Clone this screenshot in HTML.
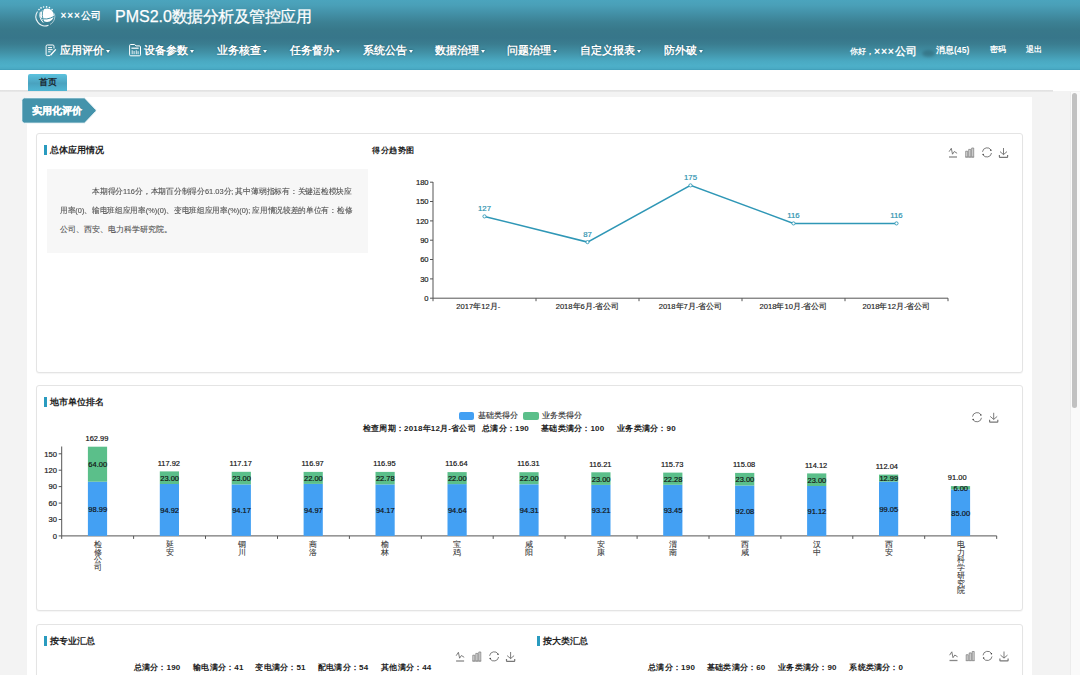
<!DOCTYPE html>
<html><head><meta charset="utf-8">
<style>
*{box-sizing:border-box}
html,body{margin:0;padding:0}
body{width:1080px;height:675px;overflow:hidden;position:relative;background:#f3f3f3;font-family:"Liberation Sans",sans-serif;color:#333}
.abs{position:absolute;white-space:nowrap}
#hdr{position:absolute;left:0;top:0;width:1080px;height:70px;background:linear-gradient(to bottom,#4ba4bd 0px,#4aa0b8 5px,#4493aa 12px,#3c8194 22px,#38788a 30px,#37768a 38px,#3a7d90 44px,#4190a5 52px,#4aa9c2 61px,#4db0c9 66px,#4aaac4 68.5px,#3f9db8 70px)}
#band{position:absolute;left:0;top:70px;width:1080px;height:21px;background:#fff}
#gline{position:absolute;left:0;top:90px;width:1053px;height:2px;background:linear-gradient(#e0e0e0,#e9e9e9)}
#panel{position:absolute;left:27px;top:97px;width:1005px;height:578px;background:#fff}
#sbtrack{position:absolute;left:1069.5px;top:92px;width:10.5px;height:583px;background:#fafafa;border-left:1px solid #ececec}
#sbthumb{position:absolute;left:1071.5px;top:93px;width:5.5px;height:315px;background:#c1c1c1;border-radius:3px}
.nav{position:absolute;top:44px;font-size:11px;font-weight:bold;color:#fff;line-height:13px;text-shadow:0 0 1.5px rgba(20,60,75,0.6)}
.caret{display:inline-block;width:0;height:0;border-left:2.5px solid transparent;border-right:2.5px solid transparent;border-top:3px solid #fff;vertical-align:middle;margin-left:2px;filter:drop-shadow(0 0 1px rgba(20,60,75,0.7))}
.card{position:absolute;left:36px;width:987px;border:1px solid #e4e4e4;border-radius:3px;background:#fff;box-shadow:0 1px 1px rgba(0,0,0,0.04)}
.ttl{position:absolute;font-size:9px;font-weight:bold;color:#222;line-height:10px}
.bar{position:absolute;width:3px;height:10px;background:#2a9bbf}
</style></head>
<body>
<div id="hdr"></div>
<div id="band"></div>
<div id="gline"></div>
<div id="panel"></div>
<div id="sbtrack"></div>
<div id="sbthumb"></div>

<!-- header content -->
<div class="abs" style="left:60.5px;top:10px;font-size:10px;font-weight:bold;color:#fff;line-height:12px"><span style="letter-spacing:0.9px">×××</span>公司</div>
<div class="abs" style="left:115px;top:6.5px;font-size:16px;color:#fff;line-height:19px;-webkit-text-stroke:0.25px #fff">PMS2.0<span style="letter-spacing:-0.5px">数据分析及管控应用</span></div>

<div class="nav" style="left:60px">应用评价<span class="caret"></span></div>
<div class="nav" style="left:144px">设备参数<span class="caret"></span></div>
<div class="nav" style="left:217px">业务核查<span class="caret"></span></div>
<div class="nav" style="left:290px">任务督办<span class="caret"></span></div>
<div class="nav" style="left:363px">系统公告<span class="caret"></span></div>
<div class="nav" style="left:435px">数据治理<span class="caret"></span></div>
<div class="nav" style="left:507px">问题治理<span class="caret"></span></div>
<div class="nav" style="left:579.5px">自定义报表<span class="caret"></span></div>
<div class="nav" style="left:664px">防外破<span class="caret"></span></div>

<div class="abs" style="left:850px;top:45px;font-size:8px;font-weight:bold;color:#fff;line-height:10px">你好，<span style="font-size:10.5px;font-weight:bold;position:relative;top:0.5px"><span style="letter-spacing:0.8px">×××</span>公司</span></div>
<div class="abs" style="left:936px;top:45px;font-size:8.6px;font-weight:bold;color:#fff;line-height:10px">消息(45)</div>
<div class="abs" style="left:990px;top:45px;font-size:8px;font-weight:bold;color:#fff;line-height:10px">密码</div>
<div class="abs" style="left:1026px;top:45px;font-size:8px;font-weight:bold;color:#fff;line-height:10px">退出</div>

<!-- tab -->
<div class="abs" style="left:28px;top:74px;width:39px;height:17px;border-radius:2px 2px 0 0;background:linear-gradient(to bottom,#5cc2de,#4aa2bf 55%,#4fb6d3);font-size:9px;font-weight:bold;color:#1a2a33;text-align:center;line-height:17px">首页</div>

<!-- badge -->
<svg class="abs" style="left:21px;top:97px;overflow:visible" width="77" height="27" viewBox="0 0 77 27"><path d="M3.5 0.8 H63.5 L74.8 12.6 Q75.6 13.5 74.8 14.4 L63.5 26.2 H3.5 Q0.8 26.2 0.8 23.5 V3.5 Q0.8 0.8 3.5 0.8Z" fill="#4493ab" stroke="#fff" stroke-width="1"/></svg>
<div class="abs" style="left:32px;top:104px;font-size:10px;font-weight:bold;color:#fff;line-height:13px;-webkit-text-stroke:0.2px #fff">实用化评价</div>

<!-- cards -->
<div class="card" style="top:133px;height:240px"></div>
<div class="card" style="top:385px;height:226px"></div>
<div class="card" style="top:624px;height:80px"></div>

<div class="bar" style="left:44.3px;top:144.5px"></div>
<div class="ttl" style="left:50px;top:144.5px">总体应用情况</div>
<div class="ttl" style="left:372px;top:146px;font-size:8px;letter-spacing:0.5px">得分趋势图</div>

<div class="bar" style="left:44.3px;top:397px"></div>
<div class="ttl" style="left:50px;top:397px">地市单位排名</div>

<div class="bar" style="left:44.3px;top:636px"></div>
<div class="ttl" style="left:50px;top:636px">按专业汇总</div>
<div class="bar" style="left:537px;top:636px"></div>
<div class="ttl" style="left:542.5px;top:636px">按大类汇总</div>


<!-- info box -->
<div class="abs" style="left:47px;top:169px;width:321px;height:83.5px;background:#f7f7f7"></div>
<div class="abs" style="left:92px;top:181.5px;font-size:7.7px;color:#555;line-height:19.3px;-webkit-text-stroke:0.12px #555;transform:scaleX(0.971);transform-origin:0 0">本期得分116分，本期百分制得分61.03分; 其中薄弱指标有：关键运检模块应</div>
<div class="abs" style="left:60px;top:200.8px;font-size:7.7px;color:#555;line-height:19.3px;-webkit-text-stroke:0.12px #555;transform:scaleX(0.96);transform-origin:0 0">用率(0)、输电班组应用率(%)(0)、变电班组应用率(%)(0); 应用情况较差的单位有：检修</div>
<div class="abs" style="left:60px;top:220.1px;font-size:7.7px;color:#555;line-height:19.3px;-webkit-text-stroke:0.12px #555">公司、西安、电力科学研究院。</div>

<!-- legend + subtitle -->
<div class="abs" style="left:458.6px;top:412px;width:15.5px;height:7.5px;border-radius:2px;background:#43a0f3"></div>
<div class="abs" style="left:478px;top:411px;font-size:8px;color:#333;line-height:10px;-webkit-text-stroke:0.15px #333">基础类得分</div>
<div class="abs" style="left:522.7px;top:412px;width:15.9px;height:7.5px;border-radius:2px;background:#5bbf8a"></div>
<div class="abs" style="left:542.2px;top:411px;font-size:8px;color:#333;line-height:10px;-webkit-text-stroke:0.15px #333">业务类得分</div>
<div class="abs" style="left:363px;top:424px;font-size:8px;font-weight:bold;color:#222;line-height:10px;letter-spacing:0.2px">检查周期：2018年12月-省公司</div>
<div class="abs" style="left:482.2px;top:424px;font-size:8px;font-weight:bold;color:#222;line-height:10px;letter-spacing:0.2px">总满分：190</div>
<div class="abs" style="left:541.2px;top:424px;font-size:8px;font-weight:bold;color:#222;line-height:10px;letter-spacing:0.2px">基础类满分：100</div>
<div class="abs" style="left:617.3px;top:424px;font-size:8px;font-weight:bold;color:#222;line-height:10px;letter-spacing:0.2px">业务类满分：90</div>

<!-- bottom subtitles -->
<div class="abs" style="left:133.7px;top:662.7px;font-size:8px;font-weight:bold;color:#222;line-height:10px;letter-spacing:0.2px">总满分：190</div>
<div class="abs" style="left:193.3px;top:662.7px;font-size:8px;font-weight:bold;color:#222;line-height:10px;letter-spacing:0.2px">输电满分：41</div>
<div class="abs" style="left:255.4px;top:662.7px;font-size:8px;font-weight:bold;color:#222;line-height:10px;letter-spacing:0.2px">变电满分：51</div>
<div class="abs" style="left:318px;top:662.7px;font-size:8px;font-weight:bold;color:#222;line-height:10px;letter-spacing:0.2px">配电满分：54</div>
<div class="abs" style="left:381.2px;top:662.7px;font-size:8px;font-weight:bold;color:#222;line-height:10px;letter-spacing:0.2px">其他满分：44</div>
<div class="abs" style="left:648.3px;top:662.7px;font-size:8px;font-weight:bold;color:#222;line-height:10px;letter-spacing:0.2px">总满分：190</div>
<div class="abs" style="left:707px;top:662.7px;font-size:8px;font-weight:bold;color:#222;line-height:10px;letter-spacing:0.2px">基础类满分：60</div>
<div class="abs" style="left:778.2px;top:662.7px;font-size:8px;font-weight:bold;color:#222;line-height:10px;letter-spacing:0.2px">业务类满分：90</div>
<div class="abs" style="left:849.4px;top:662.7px;font-size:8px;font-weight:bold;color:#222;line-height:10px;letter-spacing:0.2px">系统类满分：0</div>

<svg class="abs" style="left:0;top:0" width="1080" height="675" viewBox="0 0 1080 675">
<g stroke="#555" stroke-width="1" fill="none">
<path d="M433.0 182 V298.2 H948"/>
<path d="M430.0 298.2 H433.0"/>
<path d="M430.0 278.9 H433.0"/>
<path d="M430.0 259.5 H433.0"/>
<path d="M430.0 240.2 H433.0"/>
<path d="M430.0 220.9 H433.0"/>
<path d="M430.0 201.5 H433.0"/>
<path d="M430.0 182.2 H433.0"/>
<path d="M433.0 298.2 V301.2"/>
<path d="M536.0 298.2 V301.2"/>
<path d="M639.0 298.2 V301.2"/>
<path d="M742.0 298.2 V301.2"/>
<path d="M845.0 298.2 V301.2"/>
<path d="M948.0 298.2 V301.2"/>
</g>
<g fill="#222" stroke="#222" stroke-width="0.2" style="font-family:'Liberation Sans',sans-serif;font-size:7.6px" text-anchor="end">
<text x="428.6" y="300.9">0</text>
<text x="428.6" y="281.6">30</text>
<text x="428.6" y="262.2">60</text>
<text x="428.6" y="242.9">90</text>
<text x="428.6" y="223.6">120</text>
<text x="428.6" y="204.2">150</text>
<text x="428.6" y="184.9">180</text>
</g>
<g fill="#222" stroke="#222" stroke-width="0.15" style="font-family:'Liberation Sans',sans-serif;font-size:7.6px" text-anchor="middle">
<text x="478.3" y="309.2">2017年12月-</text>
<text x="587.5" y="309.2">2018年6月-省公司</text>
<text x="690.5" y="309.2">2018年7月-省公司</text>
<text x="793.5" y="309.2">2018年10月-省公司</text>
<text x="896.5" y="309.2">2018年12月-省公司</text>
</g>
<path d="M484.5 216.4 L587.5 242.1 L690.5 185.4 L793.5 223.4 L896.5 223.4" stroke="#2f97b6" stroke-width="1.5" fill="none"/>
<circle cx="484.5" cy="216.4" r="1.6" fill="#fff" stroke="#2f97b6" stroke-width="0.9"/>
<circle cx="587.5" cy="242.1" r="1.6" fill="#fff" stroke="#2f97b6" stroke-width="0.9"/>
<circle cx="690.5" cy="185.4" r="1.6" fill="#fff" stroke="#2f97b6" stroke-width="0.9"/>
<circle cx="793.5" cy="223.4" r="1.6" fill="#fff" stroke="#2f97b6" stroke-width="0.9"/>
<circle cx="896.5" cy="223.4" r="1.6" fill="#fff" stroke="#2f97b6" stroke-width="0.9"/>
<g fill="#2f93b0" stroke="#2f93b0" stroke-width="0.2" style="font-family:'Liberation Sans',sans-serif;font-size:7.8px" text-anchor="middle">
<text x="484.5" y="211.2">127</text>
<text x="587.5" y="236.9">87</text>
<text x="690.5" y="180.2">175</text>
<text x="793.5" y="218.2">116</text>
<text x="896.5" y="218.2">116</text>
</g>
<g stroke="#555" stroke-width="1" fill="none">
<path d="M61.7 446.5 V535.9 H996.7"/>
<path d="M58.7 535.9 H61.7"/>
<path d="M58.7 519.5 H61.7"/>
<path d="M58.7 503.1 H61.7"/>
<path d="M58.7 486.6 H61.7"/>
<path d="M58.7 470.2 H61.7"/>
<path d="M58.7 453.8 H61.7"/>
<path d="M61.7 535.9 V538.9"/>
<path d="M133.6 535.9 V538.9"/>
<path d="M205.5 535.9 V538.9"/>
<path d="M277.5 535.9 V538.9"/>
<path d="M349.4 535.9 V538.9"/>
<path d="M421.3 535.9 V538.9"/>
<path d="M493.2 535.9 V538.9"/>
<path d="M565.1 535.9 V538.9"/>
<path d="M637.1 535.9 V538.9"/>
<path d="M709.0 535.9 V538.9"/>
<path d="M780.9 535.9 V538.9"/>
<path d="M852.8 535.9 V538.9"/>
<path d="M924.7 535.9 V538.9"/>
<path d="M996.7 535.9 V538.9"/>
</g>
<g fill="#222" stroke="#222" stroke-width="0.2" style="font-family:'Liberation Sans',sans-serif;font-size:7.6px" text-anchor="end">
<text x="57" y="538.6">0</text>
<text x="57" y="522.2">30</text>
<text x="57" y="505.8">60</text>
<text x="57" y="489.3">90</text>
<text x="57" y="472.9">120</text>
<text x="57" y="456.5">150</text>
</g>
<rect x="87.9" y="481.7" width="19.2" height="54.2" fill="#43a0f3"/>
<rect x="87.9" y="446.7" width="19.2" height="35.0" fill="#5bbf8a"/>
<rect x="159.8" y="484.0" width="19.2" height="51.9" fill="#43a0f3"/>
<rect x="159.8" y="471.4" width="19.2" height="12.6" fill="#5bbf8a"/>
<rect x="231.7" y="484.4" width="19.2" height="51.5" fill="#43a0f3"/>
<rect x="231.7" y="471.8" width="19.2" height="12.6" fill="#5bbf8a"/>
<rect x="303.6" y="483.9" width="19.2" height="52.0" fill="#43a0f3"/>
<rect x="303.6" y="471.9" width="19.2" height="12.0" fill="#5bbf8a"/>
<rect x="375.5" y="484.4" width="19.2" height="51.5" fill="#43a0f3"/>
<rect x="375.5" y="471.9" width="19.2" height="12.5" fill="#5bbf8a"/>
<rect x="447.5" y="484.1" width="19.2" height="51.8" fill="#43a0f3"/>
<rect x="447.5" y="472.1" width="19.2" height="12.0" fill="#5bbf8a"/>
<rect x="519.4" y="484.3" width="19.2" height="51.6" fill="#43a0f3"/>
<rect x="519.4" y="472.2" width="19.2" height="12.0" fill="#5bbf8a"/>
<rect x="591.3" y="484.9" width="19.2" height="51.0" fill="#43a0f3"/>
<rect x="591.3" y="472.3" width="19.2" height="12.6" fill="#5bbf8a"/>
<rect x="663.2" y="484.8" width="19.2" height="51.1" fill="#43a0f3"/>
<rect x="663.2" y="472.6" width="19.2" height="12.2" fill="#5bbf8a"/>
<rect x="735.1" y="485.5" width="19.2" height="50.4" fill="#43a0f3"/>
<rect x="735.1" y="472.9" width="19.2" height="12.6" fill="#5bbf8a"/>
<rect x="807.1" y="486.0" width="19.2" height="49.9" fill="#43a0f3"/>
<rect x="807.1" y="473.4" width="19.2" height="12.6" fill="#5bbf8a"/>
<rect x="879.0" y="481.7" width="19.2" height="54.2" fill="#43a0f3"/>
<rect x="879.0" y="474.6" width="19.2" height="7.1" fill="#5bbf8a"/>
<rect x="950.9" y="489.4" width="19.2" height="46.5" fill="#43a0f3"/>
<rect x="950.9" y="486.1" width="19.2" height="3.3" fill="#5bbf8a"/>
<g fill="#111" stroke="#111" stroke-width="0.18" style="font-family:'Liberation Sans',sans-serif;font-size:7.8px" text-anchor="middle">
<text transform="translate(97.7,511.8) scale(0.96,1)">98.99</text>
<text transform="translate(97.7,467.2) scale(0.96,1)">64.00</text>
<text transform="translate(96.9,440.9) scale(0.96,1)">162.99</text>
<text transform="translate(169.6,512.9) scale(0.96,1)">94.92</text>
<text transform="translate(169.6,480.7) scale(0.96,1)">23.00</text>
<text transform="translate(168.8,465.6) scale(0.96,1)">117.92</text>
<text transform="translate(241.5,513.1) scale(0.96,1)">94.17</text>
<text transform="translate(241.5,481.1) scale(0.96,1)">23.00</text>
<text transform="translate(240.7,466.0) scale(0.96,1)">117.17</text>
<text transform="translate(313.4,512.9) scale(0.96,1)">94.97</text>
<text transform="translate(313.4,480.9) scale(0.96,1)">22.00</text>
<text transform="translate(312.6,466.1) scale(0.96,1)">116.97</text>
<text transform="translate(385.3,513.1) scale(0.96,1)">94.17</text>
<text transform="translate(385.3,481.1) scale(0.96,1)">22.78</text>
<text transform="translate(384.5,466.1) scale(0.96,1)">116.95</text>
<text transform="translate(457.3,513.0) scale(0.96,1)">94.64</text>
<text transform="translate(457.3,481.1) scale(0.96,1)">22.00</text>
<text transform="translate(456.5,466.3) scale(0.96,1)">116.64</text>
<text transform="translate(529.2,513.1) scale(0.96,1)">94.31</text>
<text transform="translate(529.2,481.3) scale(0.96,1)">22.00</text>
<text transform="translate(528.4,466.4) scale(0.96,1)">116.31</text>
<text transform="translate(601.1,513.4) scale(0.96,1)">93.21</text>
<text transform="translate(601.1,481.6) scale(0.96,1)">23.00</text>
<text transform="translate(600.3,466.5) scale(0.96,1)">116.21</text>
<text transform="translate(673.0,513.3) scale(0.96,1)">93.45</text>
<text transform="translate(673.0,481.7) scale(0.96,1)">22.28</text>
<text transform="translate(672.2,466.8) scale(0.96,1)">115.73</text>
<text transform="translate(744.9,513.7) scale(0.96,1)">92.08</text>
<text transform="translate(744.9,482.2) scale(0.96,1)">23.00</text>
<text transform="translate(744.1,467.1) scale(0.96,1)">115.08</text>
<text transform="translate(816.9,514.0) scale(0.96,1)">91.12</text>
<text transform="translate(816.9,482.7) scale(0.96,1)">23.00</text>
<text transform="translate(816.1,467.6) scale(0.96,1)">114.12</text>
<text transform="translate(888.8,511.8) scale(0.96,1)">99.05</text>
<text transform="translate(888.8,481.1) scale(0.96,1)">12.99</text>
<text transform="translate(886.8,468.8) scale(0.96,1)">112.04</text>
<text transform="translate(960.7,515.6) scale(0.96,1)">85.00</text>
<text transform="translate(960.7,490.7) scale(0.96,1)">6.00</text>
<text transform="translate(957.2,480.3) scale(0.96,1)">91.00</text>
</g>
<g fill="#333" stroke="#333" stroke-width="0.08" style="font-family:'Liberation Sans',sans-serif;font-size:7.9px" text-anchor="middle">
<text x="97.7" y="546.8">检</text>
<text x="97.7" y="554.5">修</text>
<text x="97.7" y="562.3">公</text>
<text x="97.7" y="570.0">司</text>
<text x="169.6" y="546.8">延</text>
<text x="169.6" y="554.5">安</text>
<text x="241.5" y="546.8">铜</text>
<text x="241.5" y="554.5">川</text>
<text x="313.4" y="546.8">商</text>
<text x="313.4" y="554.5">洛</text>
<text x="385.3" y="546.8">榆</text>
<text x="385.3" y="554.5">林</text>
<text x="457.3" y="546.8">宝</text>
<text x="457.3" y="554.5">鸡</text>
<text x="529.2" y="546.8">咸</text>
<text x="529.2" y="554.5">阳</text>
<text x="601.1" y="546.8">安</text>
<text x="601.1" y="554.5">康</text>
<text x="673.0" y="546.8">渭</text>
<text x="673.0" y="554.5">南</text>
<text x="744.9" y="546.8">西</text>
<text x="744.9" y="554.5">咸</text>
<text x="816.9" y="546.8">汉</text>
<text x="816.9" y="554.5">中</text>
<text x="888.8" y="546.8">西</text>
<text x="888.8" y="554.5">安</text>
<text x="960.7" y="546.8">电</text>
<text x="960.7" y="554.5">力</text>
<text x="960.7" y="562.3">科</text>
<text x="960.7" y="570.0">学</text>
<text x="960.7" y="577.8">研</text>
<text x="960.7" y="585.5">究</text>
<text x="960.7" y="593.3">院</text>
</g>
</svg>
<svg class="abs" style="left:0;top:0" width="1080" height="675" viewBox="0 0 1080 675"><g transform="translate(948.7,148)" fill="none" stroke="#666" stroke-width="0.85" stroke-linejoin="round"><path d="M0.4 3.7 L2.6 0.3 L3.8 6.2 L5.6 3.5 L8.4 5.3"/><path d="M0.3 9 H8.3" stroke="#888" stroke-width="1.3"/></g><g transform="translate(965.3000000000001,147.8)" fill="#d8d8d8" stroke="#777" stroke-width="0.7"><path d="M0.4 9.3 V3.4 H2.4 V9.3 Z M3.4 9.3 V1.6 H5.5 V9.3 Z M6.4 9.3 V0.2 H8.4 V9.3 Z"/><path d="M0 9.3 H8.8" stroke="#999" stroke-width="1"/></g><g transform="translate(982.0,147.4)" fill="none" stroke="#666" stroke-width="0.85"><path d="M0.5 4.4 A4.6 4.6 0 0 1 9 2.6"/><path d="M9.5 5.6 A4.6 4.6 0 0 1 1 7.4"/><circle cx="8.9" cy="2.8" r="0.75" fill="#333" stroke="none"/><circle cx="1.1" cy="7.2" r="0.75" fill="#333" stroke="none"/></g><g transform="translate(999.0,148)" fill="none" stroke="#666" stroke-width="0.85"><path d="M4.5 0 V6.6 M1 3.6 L4.5 6.6 L8 3.6"/><path d="M0.4 6.9 V8.8 Q0.4 9.4 1 9.4 H8 Q8.6 9.4 8.6 8.8 V6.9" stroke="#777" stroke-width="1.2"/></g><g transform="translate(972,412.2)" fill="none" stroke="#666" stroke-width="0.85"><path d="M0.5 4.4 A4.6 4.6 0 0 1 9 2.6"/><path d="M9.5 5.6 A4.6 4.6 0 0 1 1 7.4"/><circle cx="8.9" cy="2.8" r="0.75" fill="#333" stroke="none"/><circle cx="1.1" cy="7.2" r="0.75" fill="#333" stroke="none"/></g><g transform="translate(989.2,412.8)" fill="none" stroke="#666" stroke-width="0.85"><path d="M4.5 0 V6.6 M1 3.6 L4.5 6.6 L8 3.6"/><path d="M0.4 6.9 V8.8 Q0.4 9.4 1 9.4 H8 Q8.6 9.4 8.6 8.8 V6.9" stroke="#777" stroke-width="1.2"/></g><g transform="translate(455.8,652)" fill="none" stroke="#666" stroke-width="0.85" stroke-linejoin="round"><path d="M0.4 3.7 L2.6 0.3 L3.8 6.2 L5.6 3.5 L8.4 5.3"/><path d="M0.3 9 H8.3" stroke="#888" stroke-width="1.3"/></g><g transform="translate(472.40000000000003,651.8)" fill="#d8d8d8" stroke="#777" stroke-width="0.7"><path d="M0.4 9.3 V3.4 H2.4 V9.3 Z M3.4 9.3 V1.6 H5.5 V9.3 Z M6.4 9.3 V0.2 H8.4 V9.3 Z"/><path d="M0 9.3 H8.8" stroke="#999" stroke-width="1"/></g><g transform="translate(489.1,651.4)" fill="none" stroke="#666" stroke-width="0.85"><path d="M0.5 4.4 A4.6 4.6 0 0 1 9 2.6"/><path d="M9.5 5.6 A4.6 4.6 0 0 1 1 7.4"/><circle cx="8.9" cy="2.8" r="0.75" fill="#333" stroke="none"/><circle cx="1.1" cy="7.2" r="0.75" fill="#333" stroke="none"/></g><g transform="translate(506.1,652)" fill="none" stroke="#666" stroke-width="0.85"><path d="M4.5 0 V6.6 M1 3.6 L4.5 6.6 L8 3.6"/><path d="M0.4 6.9 V8.8 Q0.4 9.4 1 9.4 H8 Q8.6 9.4 8.6 8.8 V6.9" stroke="#777" stroke-width="1.2"/></g><g transform="translate(949.2,651.5)" fill="none" stroke="#666" stroke-width="0.85" stroke-linejoin="round"><path d="M0.4 3.7 L2.6 0.3 L3.8 6.2 L5.6 3.5 L8.4 5.3"/><path d="M0.3 9 H8.3" stroke="#888" stroke-width="1.3"/></g><g transform="translate(965.8000000000001,651.3)" fill="#d8d8d8" stroke="#777" stroke-width="0.7"><path d="M0.4 9.3 V3.4 H2.4 V9.3 Z M3.4 9.3 V1.6 H5.5 V9.3 Z M6.4 9.3 V0.2 H8.4 V9.3 Z"/><path d="M0 9.3 H8.8" stroke="#999" stroke-width="1"/></g><g transform="translate(982.5,650.9)" fill="none" stroke="#666" stroke-width="0.85"><path d="M0.5 4.4 A4.6 4.6 0 0 1 9 2.6"/><path d="M9.5 5.6 A4.6 4.6 0 0 1 1 7.4"/><circle cx="8.9" cy="2.8" r="0.75" fill="#333" stroke="none"/><circle cx="1.1" cy="7.2" r="0.75" fill="#333" stroke="none"/></g><g transform="translate(999.5,651.5)" fill="none" stroke="#666" stroke-width="0.85"><path d="M4.5 0 V6.6 M1 3.6 L4.5 6.6 L8 3.6"/><path d="M0.4 6.9 V8.8 Q0.4 9.4 1 9.4 H8 Q8.6 9.4 8.6 8.8 V6.9" stroke="#777" stroke-width="1.2"/></g></svg>
<svg class="abs" style="left:0;top:0" width="200" height="70" viewBox="0 0 200 70">
<g fill="#fff">
<circle cx="39.0" cy="9.6" r="0.8"/><circle cx="41.0" cy="7.9" r="0.8"/><circle cx="43.6" cy="7.0" r="0.8"/><circle cx="46.6" cy="6.9" r="0.8"/><circle cx="49.4" cy="7.6" r="0.8"/><circle cx="52.1" cy="9.5" r="0.8"/>
</g>
<path d="M37.5 11.5 A9.2 9.2 0 0 0 48.5 25.2" stroke="#fff" stroke-width="1.1" fill="none" opacity="0.9"/>
<path d="M54.4 13.5 A9.2 9.2 0 0 1 50 24.5" stroke="#fff" stroke-width="0.8" fill="none" opacity="0.7"/>
<circle cx="47" cy="15.3" r="6.8" fill="#fff"/>
<path d="M39.8 17.8 Q46.5 20.8 54.2 16.3" stroke="#3f8ea3" stroke-width="1" fill="none"/>
<path d="M43.4 8.8 Q40.8 15.2 44.4 23.2" stroke="#3f8ea3" stroke-width="0.9" fill="none"/>
<path d="M40.4 11.8 Q38.4 17.4 43.2 22.6" stroke="#fff" stroke-width="1" fill="none"/>
<!-- nav icon 1: note with pencil -->
<g fill="none" stroke="#fff" stroke-width="1">
<path d="M54 48.5 V46.2 Q54 45 52.8 45 H47.3 Q46.1 45 46.1 46.2 V54.4 Q46.1 55.6 47.3 55.6 H50.2"/>
<path d="M48.1 47.6 H52 M48.1 49.7 H52.6 M48.1 51.8 H50.6"/>
<path d="M50.5 55.2 L55.8 49.4" stroke-width="1.4"/>
</g>
<!-- nav icon 2: folder with bars -->
<g fill="none" stroke="#fff" stroke-width="1">
<path d="M129.6 45.6 Q129.6 44.5 130.7 44.5 H134.6 L136 45.9 H139.4 Q140.5 45.9 140.5 47 V54.8 Q140.5 55.8 139.4 55.8 H130.7 Q129.6 55.8 129.6 54.8 Z"/>
<path d="M131.4 48.2 H138.6" stroke-width="1.2"/>
<path d="M132.2 54.2 V50.3 M134.1 54.2 V51 M136.3 54.2 V50.3 M138.1 54.2 V51.2" stroke-width="0.85"/>
</g>
</svg>
<div class="abs" style="left:922px;top:50px;width:13px;height:7px;border-radius:50%;background:#2b5f6e;opacity:0.5;filter:blur(1.8px)"></div>

</body></html>
